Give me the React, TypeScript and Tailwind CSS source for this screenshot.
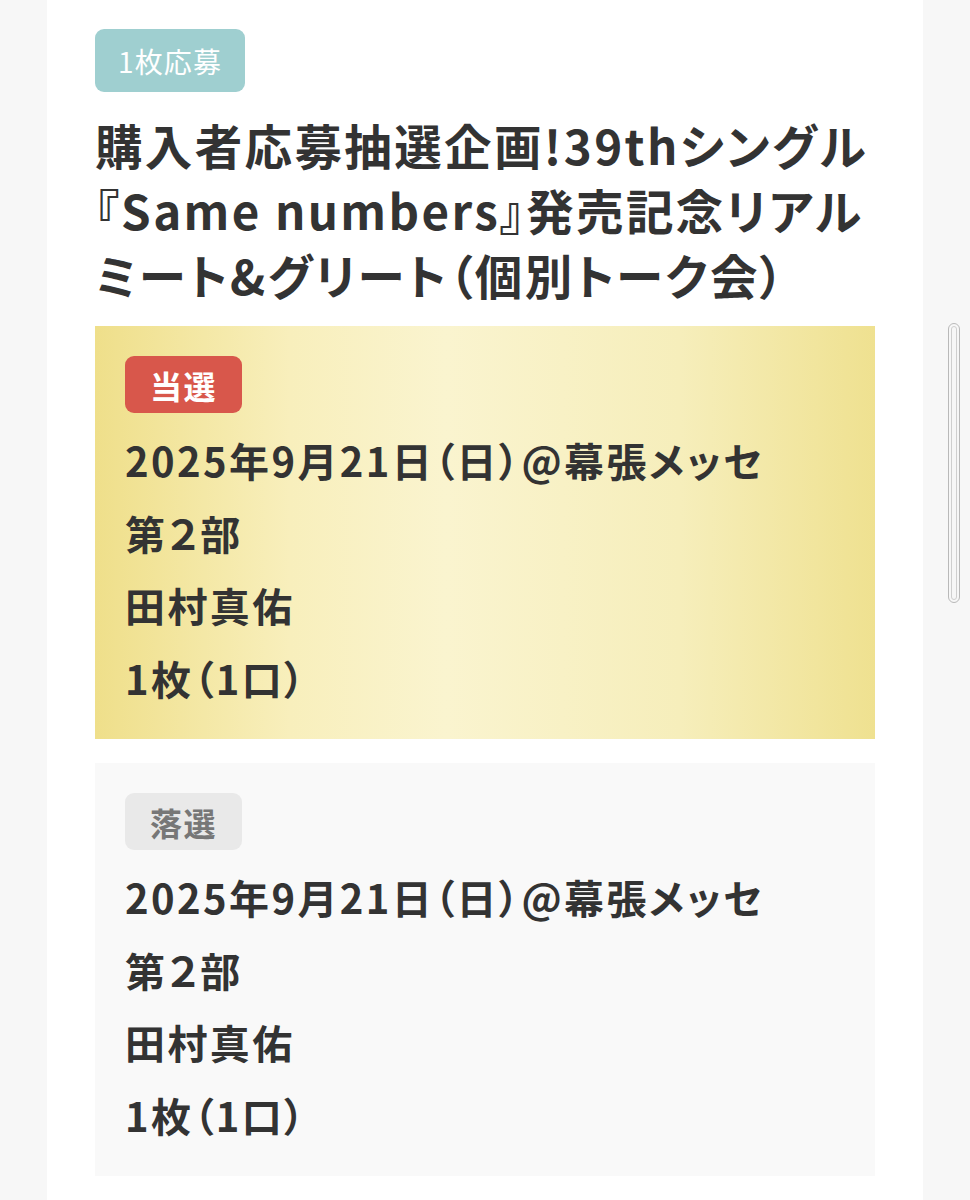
import React from 'react';

const jp = { fontFamily: '"Noto Sans CJK JP", "Noto Sans", sans-serif' };

type Result = {
  label: string;
  won: boolean;
  lines: string[];
};

const results: Result[] = [
  {
    label: '当選',
    won: true,
    lines: ['2025年9月21日（日）@幕張メッセ', '第２部', '田村真佑', '1枚（1口）'],
  },
  {
    label: '落選',
    won: false,
    lines: ['2025年9月21日（日）@幕張メッセ', '第２部', '田村真佑', '1枚（1口）'],
  },
];

function ResultCard({ r }: { r: Result }) {
  return (
    <div
      className={
        r.won
          ? 'px-[30px] pt-[30px] pb-[25px] bg-[linear-gradient(90deg,#efdf8a_0%,#f8efbc_25%,#faf4cf_45%,#f6eebb_75%,#efe190_100%)]'
          : 'px-[30px] pt-[30px] pb-[25px] bg-[#f9f9f9]'
      }
    >
      <div
        className={
          r.won
            ? 'w-[117px] h-[57px] rounded-[9px] bg-[#d8574b] text-white flex items-center justify-center text-[32px] font-bold tracking-[0.05em]'
            : 'w-[117px] h-[57px] rounded-[9px] bg-[#e9e9e9] text-[#777] flex items-center justify-center text-[32px] font-bold tracking-[0.05em]'
        }
      >
        {r.label}
      </div>
      <div className="mt-[11px] text-[#333] font-bold text-[40px] leading-[72.5px] tracking-[0.06em]">
        {r.lines.map((l, i) => (
          <div key={i}>{l}</div>
        ))}
      </div>
    </div>
  );
}

export default function App() {
  return (
    <div
      className="min-h-screen bg-[#f7f7f7] flex justify-center relative [font-feature-settings:'palt']"
      style={jp}
    >
      <main className="w-[876px] bg-white px-[48px] pt-[29px] pb-[40px]">
        <div className="w-[150px] h-[63px] rounded-[9px] bg-[#9fcfd0] text-white flex items-center justify-center text-[28px] tracking-[0.04em]">
          1枚応募
        </div>
        <h1 className="mt-[20px] text-[#333] font-bold text-[47.5px] leading-[65px] tracking-[0.05em] whitespace-nowrap">
          購入者応募抽選企画!39thシングル
          <br />
          『Same numbers』発売記念リアル
          <br />
          ミート&amp;グリート（個別トーク会）
        </h1>
        <div className="mt-[19px] flex flex-col gap-[24px]">
          {results.map((r, i) => (
            <ResultCard key={i} r={r} />
          ))}
        </div>
      </main>
      {/* scrollbar */}
      <div className="absolute left-[948px] top-[323px] w-[12px] h-[280px] rounded-full border-[1.5px] border-[#b9b9b9] p-[2px]">
        <div className="w-full h-full rounded-full border border-[#cfcfcf]" />
      </div>
    </div>
  );
}
